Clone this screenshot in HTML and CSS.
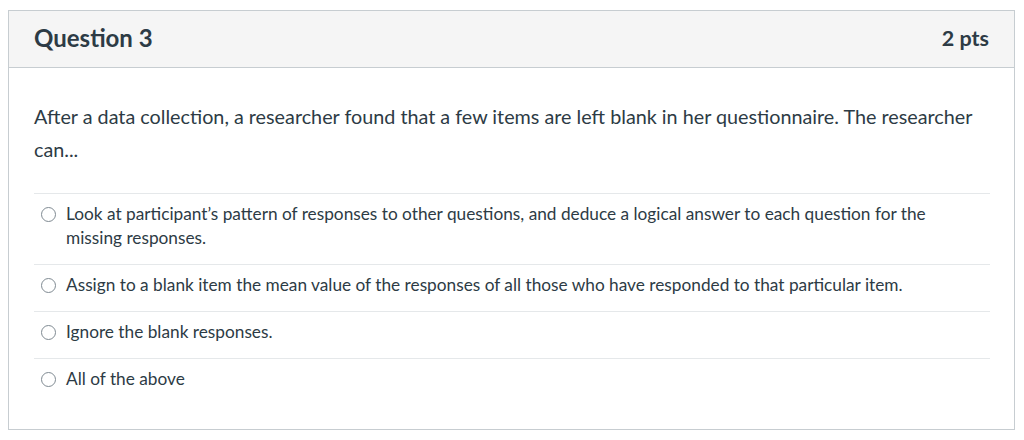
FILE: index.html
```html
<!DOCTYPE html>
<html>
<head>
<meta charset="utf-8">
<link rel="stylesheet" href="styles.css">
</head>
<body>
<div class="question">
  <div class="q-header">
    <h2 class="q-title">Question 3</h2>
    <div class="q-points">2 pts</div>
  </div>
  <div class="q-body">
    <p class="q-text">After a data collection, a researcher found that a few items are left blank in her questionnaire. The researcher can...</p>
    <div class="answers">
      <label class="answer"><span class="radio"></span><span class="answer-text">Look at participant’s pattern of responses to other questions, and deduce a logical answer to each question for the missing responses.</span></label>
      <label class="answer"><span class="radio"></span><span class="answer-text">Assign to a blank item the mean value of the responses of all those who have responded to that particular item.</span></label>
      <label class="answer"><span class="radio"></span><span class="answer-text">Ignore the blank responses.</span></label>
      <label class="answer"><span class="radio"></span><span class="answer-text">All of the above</span></label>
    </div>
  </div>
</div>
</body>
</html>
```

FILE: styles.css
```css
html, body {
  margin: 0;
  padding: 0;
  background: #ffffff;
}
body {
  padding: 10px 9px 10px 8px;
  font-family: Lato, "Liberation Sans", sans-serif;
  color: #2d3b45;
}
.question {
  border: 1px solid #c7cdd1;
  height: 420px;
  box-sizing: border-box;
}
.q-header {
  display: flex;
  justify-content: space-between;
  align-items: center;
  height: 57px;
  box-sizing: border-box;
  padding: 0 25px 3px 25px;
  background: #f5f5f5;
  border-bottom: 1px solid #c7cdd1;
}
.q-title {
  margin: 0;
  font-size: 24px;
  font-weight: bold;
}
.q-points {
  font-size: 21.5px;
  font-weight: bold;
}
.q-body {
  padding: 0 24px 0 25px;
}
.q-text {
  margin: 0 0 32px 0;
  padding: 32px 0 0 0;
  font-size: 19.77px;
  line-height: 33px;
  height: 93px;
  box-sizing: border-box;
}
.answers {
  display: flex;
  flex-direction: column;
}
.answer {
  display: flex;
  align-items: flex-start;
  gap: 10px;
  padding: 8px 0 14px 7px;
  border-top: 1px solid #e5e8ea;
  font-size: 17.25px;
  line-height: 24px;
}
.radio {
  flex: none;
  width: 15px;
  height: 15px;
  margin-top: 5px;
  border: 1px solid #7f8a92;
  border-radius: 50%;
  box-sizing: border-box;
  background: #fff;
}
.answer-text {
  padding-right: 56px;
}
```
